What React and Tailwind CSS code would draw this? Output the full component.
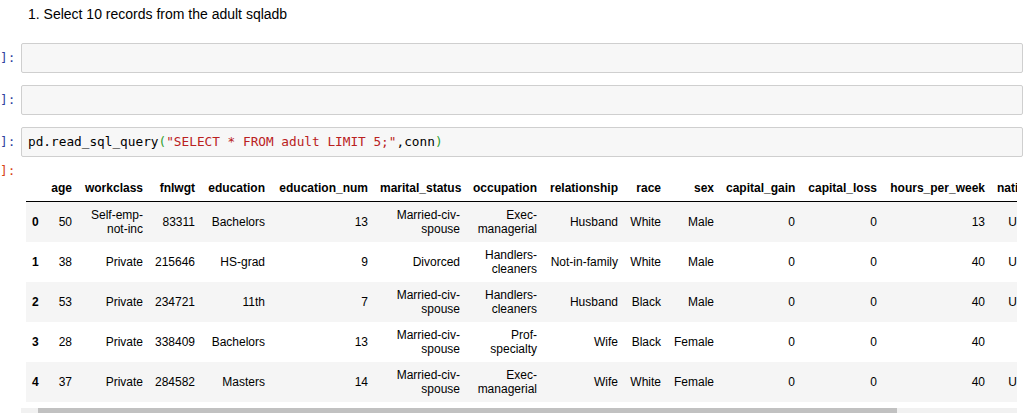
import React from "react";

const cols = [
  { k: "", w: 17 },
  { k: "age", w: 35 },
  { k: "workclass", w: 71 },
  { k: "fnlwgt", w: 52 },
  { k: "education", w: 70 },
  { k: "education_num", w: 103 },
  { k: "marital_status", w: 92 },
  { k: "occupation", w: 77 },
  { k: "relationship", w: 81 },
  { k: "race", w: 43 },
  { k: "sex", w: 53 },
  { k: "capital_gain", w: 81 },
  { k: "capital_loss", w: 82 },
  { k: "hours_per_week", w: 108 },
  { k: "native_country", w: 96 },
  { k: "income", w: 60 },
];

const rows = [
  ["0", "50", ["Self-emp-", "not-inc"], "83311", "Bachelors", "13", ["Married-civ-", "spouse"], ["Exec-", "managerial"], "Husband", "White", "Male", "0", "0", "13", "United-States", "<=50K"],
  ["1", "38", "Private", "215646", "HS-grad", "9", "Divorced", ["Handlers-", "cleaners"], "Not-in-family", "White", "Male", "0", "0", "40", "United-States", "<=50K"],
  ["2", "53", "Private", "234721", "11th", "7", ["Married-civ-", "spouse"], ["Handlers-", "cleaners"], "Husband", "Black", "Male", "0", "0", "40", "United-States", "<=50K"],
  ["3", "28", "Private", "338409", "Bachelors", "13", ["Married-civ-", "spouse"], ["Prof-", "specialty"], "Wife", "Black", "Female", "0", "0", "40", "Cuba", "<=50K"],
  ["4", "37", "Private", "284582", "Masters", "14", ["Married-civ-", "spouse"], ["Exec-", "managerial"], "Wife", "White", "Female", "0", "0", "40", "United-States", "<=50K"],
];

const total = cols.reduce((a, c) => a + c.w, 0);

function Cell({ v }) {
  if (Array.isArray(v)) {
    return (
      <>
        {v[0]}
        <br />
        {v[1]}
      </>
    );
  }
  return v;
}

function Prompt({ red }) {
  return (
    <div
      className={
        "w-[21px] shrink-0 font-['DejaVu_Sans_Mono',monospace] text-[12.75px] leading-[14px] whitespace-nowrap " +
        (red ? "text-[#d84315]" : "text-[#303f9f]")
      }
    >
      ]:
    </div>
  );
}

export default function App() {
  return (
    <div className="w-[1026px] h-[413px] overflow-hidden bg-white text-black">
      <div className="pl-[28px] pt-[4px] h-[24px] font-['Liberation_Sans',Arial,sans-serif] text-[14px] leading-[20px]">
        1. Select 10 records from the adult sqladb
      </div>

      <div className="mt-[19px] flex flex-col gap-[12px]">
        {[0, 1, 2].map((i) => (
          <div key={i} className="flex items-center">
            <Prompt />
            <div className="w-[1002px] h-[30px] border border-[#cfcfcf] bg-[#f7f7f7] rounded-[2px] pl-[6px] flex items-center font-['DejaVu_Sans_Mono',monospace] text-[12.75px] whitespace-pre">
              {i === 2 && (
                <span>
                  pd.read_sql_query<span className="text-[#2e9e2e]">(</span>
                  <span className="text-[#ba2121]">"SELECT * FROM adult LIMIT 5;"</span>
                  ,conn<span className="text-[#2e9e2e]">)</span>
                </span>
              )}
            </div>
          </div>
        ))}
      </div>

      <div className="mt-[7px] flex">
        <Prompt red />
        <div className="w-[996px]">
          <div className="overflow-hidden pt-[11px] pl-[5px]">
            <table
              className="table-fixed border-collapse font-['Liberation_Sans',Arial,sans-serif] text-[12px] leading-[14px]"
              style={{ width: total }}
            >
              <colgroup>
                {cols.map((c, i) => (
                  <col key={i} style={{ width: c.w }} />
                ))}
              </colgroup>
              <thead>
                <tr>
                  {cols.map((c, i) => (
                    <th
                      key={i}
                      className="px-[6px] py-[6px] text-right font-bold whitespace-nowrap border-b border-black"
                    >
                      {c.k}
                    </th>
                  ))}
                </tr>
              </thead>
              <tbody>
                {rows.map((r, ri) => (
                  <tr key={ri} className={ri % 2 === 0 ? "bg-[#f5f5f5]" : "bg-white"}>
                    {r.map((v, ci) =>
                      ci === 0 ? (
                        <th key={ci} className="px-[6px] py-[6px] text-right font-bold whitespace-nowrap">
                          {v}
                        </th>
                      ) : (
                        <td key={ci} className="px-[6px] py-[6px] text-right whitespace-nowrap">
                          <Cell v={v} />
                        </td>
                      )
                    )}
                  </tr>
                ))}
              </tbody>
            </table>
          </div>
          <div className="mt-[6px] h-[17px] bg-[#f1f1f1] flex">
            <div className="ml-[17px] w-[859px] h-full bg-[#c1c1c1]" />
          </div>
        </div>
      </div>
    </div>
  );
}
